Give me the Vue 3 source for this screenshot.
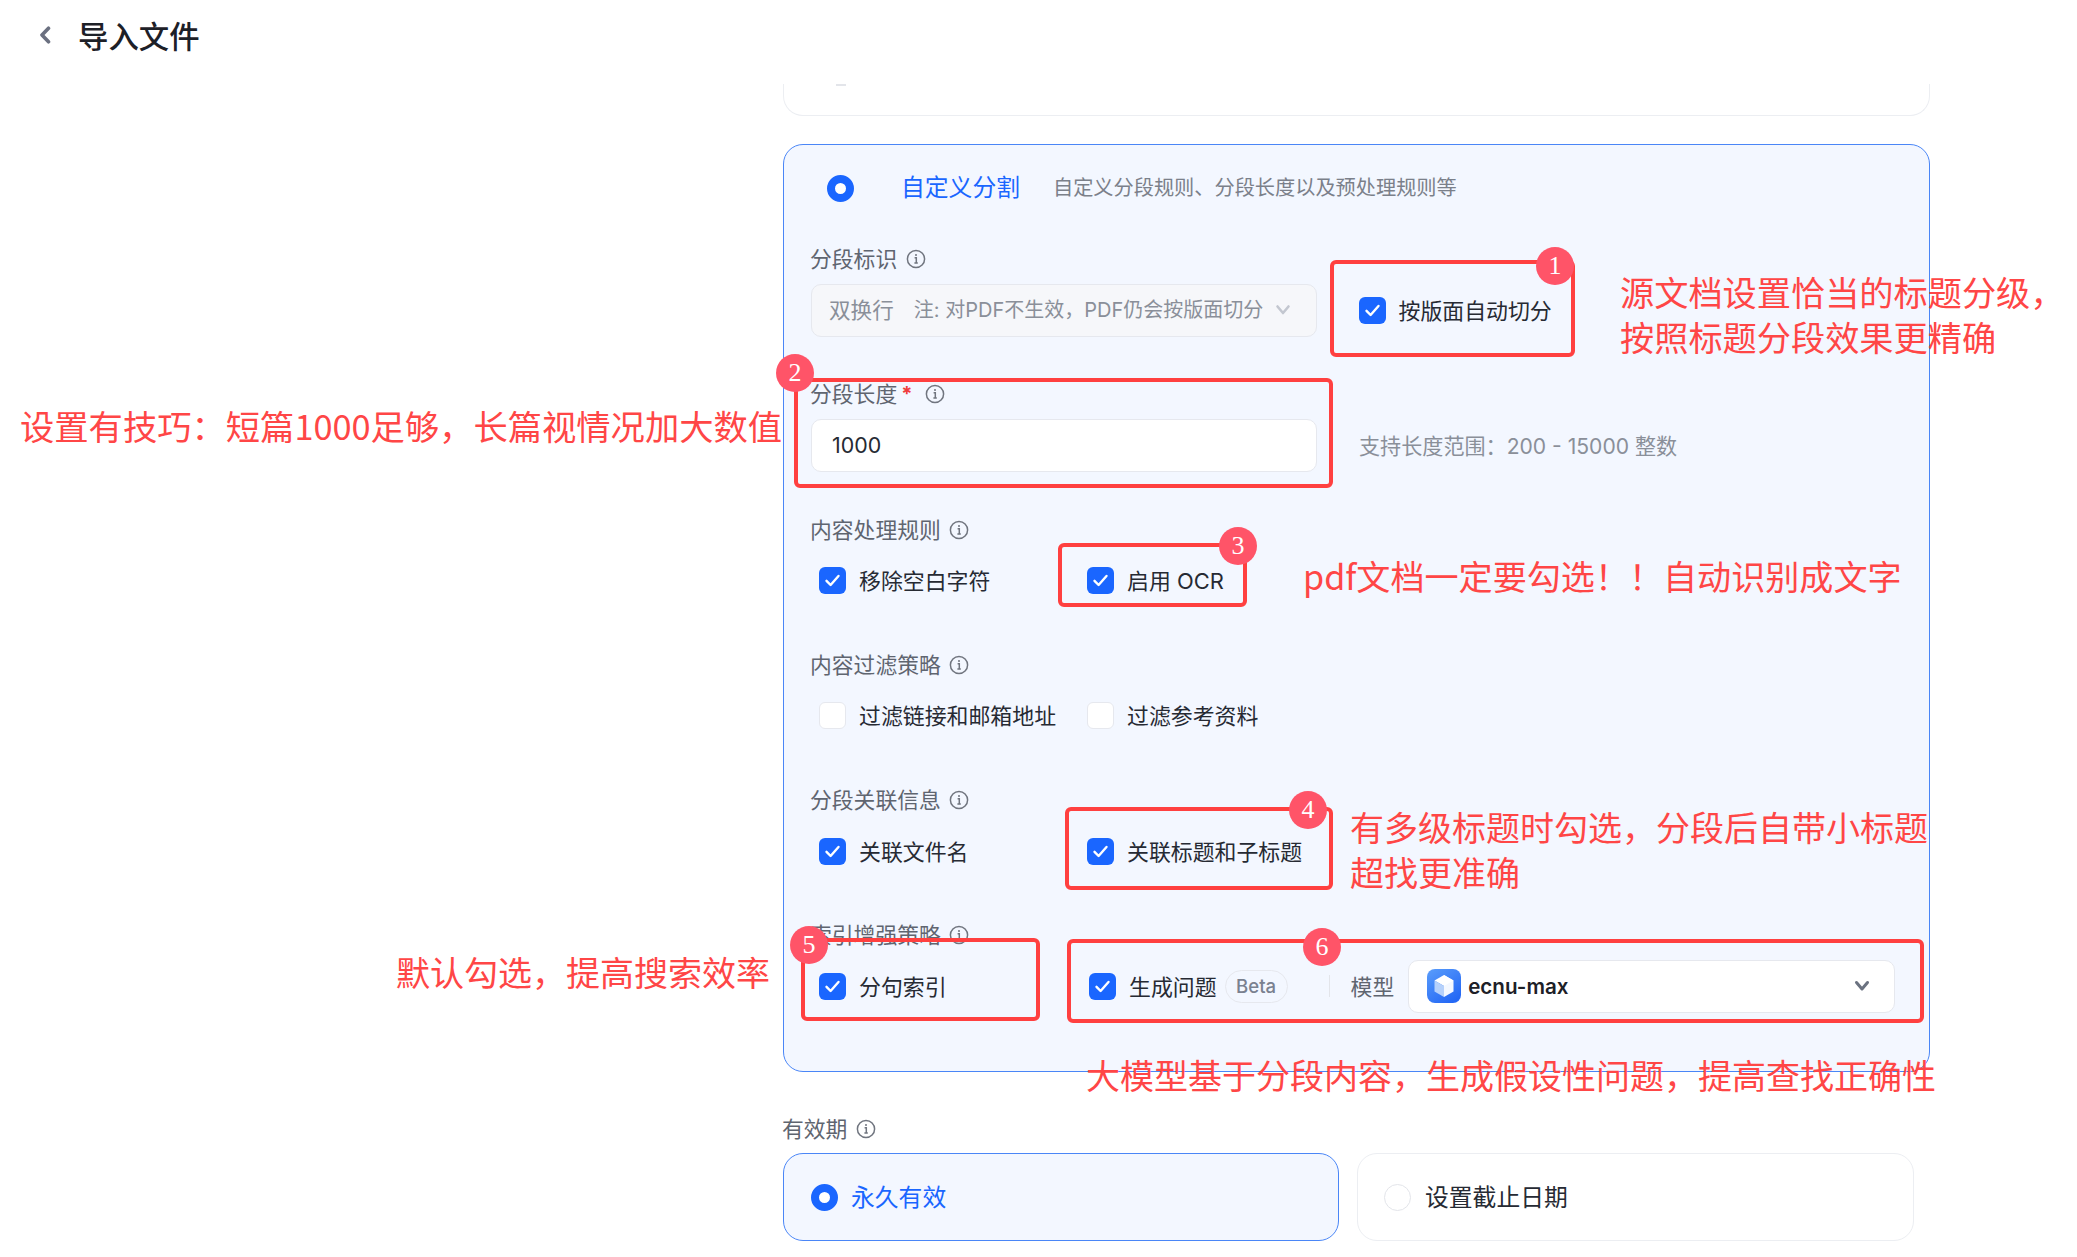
<script setup>
const checkPath = 'M7.5 13.8 L11.6 18 L19.5 9'
const rows = [
  { label: '内容处理规则', items: [{ text: '移除空白字符', on: true }, { text: '启用 OCR', on: true }] },
  { label: '内容过滤策略', items: [{ text: '过滤链接和邮箱地址', on: false }, { text: '过滤参考资料', on: false }] },
  { label: '分段关联信息', items: [{ text: '关联文件名', on: true }, { text: '关联标题和子标题', on: true }] }
]
const boxes = ['b1', 'b2', 'b3', 'b4', 'b5', 'b6']
const notes = [
  { cls: 'n1', lines: ['源文档设置恰当的标题分级，', '按照标题分段效果更精确'] },
  { cls: 'n2', lines: ['设置有技巧：短篇1000足够，长篇视情况加大数值'] },
  { cls: 'n3', lines: ['pdf文档一定要勾选！！自动识别成文字'] },
  { cls: 'n4', lines: ['有多级标题时勾选，分段后自带小标题', '超找更准确'] },
  { cls: 'n5', lines: ['默认勾选，提高搜索效率'] },
  { cls: 'n6', lines: ['大模型基于分段内容，生成假设性问题，提高查找正确性'] }
]
</script>

<template>
  <div class="page">
    <header class="topbar">
      <svg class="back" width="12" height="18" viewBox="0 0 12 18"><path d="M9.5 2.2 L3 9 L9.5 15.8" fill="none" stroke="#6b7080" stroke-width="3.6" stroke-linecap="round" stroke-linejoin="round"/></svg>
      <h1 class="title">导入文件</h1>
    </header>

    <main class="content">
      <div class="stub"></div>

      <section class="custom">
        <div class="custom-head">
          <span class="radio on"></span>
          <span class="custom-title">自定义分割</span>
          <span class="custom-desc">自定义分段规则、分段长度以及预处理规则等</span>
        </div>

        <div class="section">
          <div class="label"><span class="label-text">分段标识</span>
            <svg class="info" viewBox="0 0 20 20"><circle cx="10" cy="10" r="8.6" fill="none" stroke="#70757f" stroke-width="1.5"/><path d="M8.6 8.7h1.7v5M8.4 14h3.4" fill="none" stroke="#70757f" stroke-width="1.5"/><circle cx="10" cy="5.9" r="1" fill="#70757f"/></svg>
          </div>
          <div class="control-row">
            <div class="select disabled">
              <span class="sel-main">双换行</span>
              <span class="sel-note">注: 对PDF不生效，PDF仍会按版面切分</span>
              <svg class="sel-chev" width="16" height="12" viewBox="0 0 16 12"><path d="M2.5 2.5 L8 9 L13.5 2.5" fill="none" stroke="#c3c7d0" stroke-width="2.6" stroke-linecap="round" stroke-linejoin="round"/></svg>
            </div>
            <label class="check-item">
              <span class="check on"><svg viewBox="0 0 27 27"><path :d="checkPath" fill="none" stroke="#fff" stroke-width="2.4" stroke-linecap="round" stroke-linejoin="round"/></svg></span>
              <span class="check-text">按版面自动切分</span>
            </label>
          </div>
        </div>

        <div class="section">
          <div class="label"><span class="label-text">分段长度</span><span class="req">*</span>
            <svg class="info" viewBox="0 0 20 20"><circle cx="10" cy="10" r="8.6" fill="none" stroke="#70757f" stroke-width="1.5"/><path d="M8.6 8.7h1.7v5M8.4 14h3.4" fill="none" stroke="#70757f" stroke-width="1.5"/><circle cx="10" cy="5.9" r="1" fill="#70757f"/></svg>
          </div>
          <div class="control-row">
            <div class="input">1000</div>
            <span class="hint">支持长度范围：200 - 15000 整数</span>
          </div>
        </div>

        <div class="section" v-for="row in rows" :key="row.label">
          <div class="label"><span class="label-text">{{ row.label }}</span>
            <svg class="info" viewBox="0 0 20 20"><circle cx="10" cy="10" r="8.6" fill="none" stroke="#70757f" stroke-width="1.5"/><path d="M8.6 8.7h1.7v5M8.4 14h3.4" fill="none" stroke="#70757f" stroke-width="1.5"/><circle cx="10" cy="5.9" r="1" fill="#70757f"/></svg>
          </div>
          <div class="checks">
            <label class="check-item fixed" v-for="item in row.items" :key="item.text">
              <span class="check" :class="{ on: item.on }"><svg v-if="item.on" viewBox="0 0 27 27"><path :d="checkPath" fill="none" stroke="#fff" stroke-width="2.4" stroke-linecap="round" stroke-linejoin="round"/></svg></span>
              <span class="check-text">{{ item.text }}</span>
            </label>
          </div>
        </div>

        <div class="section">
          <div class="label"><span class="label-text">索引增强策略</span>
            <svg class="info" viewBox="0 0 20 20"><circle cx="10" cy="10" r="8.6" fill="none" stroke="#70757f" stroke-width="1.5"/><path d="M8.6 8.7h1.7v5M8.4 14h3.4" fill="none" stroke="#70757f" stroke-width="1.5"/><circle cx="10" cy="5.9" r="1" fill="#70757f"/></svg>
          </div>
          <div class="checks">
            <label class="check-item fixed wide">
              <span class="check on"><svg viewBox="0 0 27 27"><path :d="checkPath" fill="none" stroke="#fff" stroke-width="2.4" stroke-linecap="round" stroke-linejoin="round"/></svg></span>
              <span class="check-text">分句索引</span>
            </label>
            <label class="check-item">
              <span class="check on"><svg viewBox="0 0 27 27"><path :d="checkPath" fill="none" stroke="#fff" stroke-width="2.4" stroke-linecap="round" stroke-linejoin="round"/></svg></span>
              <span class="check-text">生成问题</span>
            </label>
            <span class="beta">Beta</span>
            <span class="divider"></span>
            <span class="model-label">模型</span>
            <div class="select model">
              <svg class="cube" width="34" height="34" viewBox="0 0 34 34">
                <defs><linearGradient id="cubeg" x1="0" y1="0" x2="0.7" y2="1"><stop offset="0" stop-color="#5a9dfb"/><stop offset="1" stop-color="#2468f5"/></linearGradient></defs>
                <rect width="34" height="34" rx="8" fill="url(#cubeg)"/>
                <path d="M17 6 L26.5 11.5 V22.5 L17 28 Z" fill="#f4f8ff"/>
                <path d="M17 6 L7.5 11.5 L17 17 L26.5 11.5 Z" fill="#ffffff"/>
                <path d="M7.5 11.5 V22.5 L17 28 V17 Z" fill="#b6d1fb"/>
              </svg>
              <span class="model-name">ecnu-max</span>
              <svg class="model-chev" width="16" height="12" viewBox="0 0 16 12"><path d="M2.5 2.5 L8 9 L13.5 2.5" fill="none" stroke="#6b7280" stroke-width="3" stroke-linecap="round" stroke-linejoin="round"/></svg>
            </div>
          </div>
        </div>
      </section>

      <div class="label expiry-label"><span class="label-text">有效期</span>
        <svg class="info" viewBox="0 0 20 20"><circle cx="10" cy="10" r="8.6" fill="none" stroke="#70757f" stroke-width="1.5"/><path d="M8.6 8.7h1.7v5M8.4 14h3.4" fill="none" stroke="#70757f" stroke-width="1.5"/><circle cx="10" cy="5.9" r="1" fill="#70757f"/></svg>
      </div>
      <div class="expiry">
        <div class="exp-card active">
          <span class="radio on"></span>
          <span class="exp-text">永久有效</span>
        </div>
        <div class="exp-card">
          <span class="radio"></span>
          <span class="exp-text">设置截止日期</span>
        </div>
      </div>
    </main>

    <div class="overlay">
      <div v-for="(b, i) in boxes" :key="b" class="redbox" :class="b">
        <span class="badge">{{ i + 1 }}</span>
      </div>
      <div v-for="n in notes" :key="n.cls" class="note" :class="n.cls">
        <div v-for="l in n.lines" :key="l">{{ l }}</div>
      </div>
    </div>
  </div>
</template>

<style>
html, body { margin: 0; padding: 0; background: #fff; overflow: hidden; }
</style>

<style scoped>
.page {
  position: relative;
  width: 2077px;
  height: 1257px;
  overflow: hidden;
  background: #fff;
  font-family: Inter, "Noto Sans CJK SC", sans-serif;
  color: #262a33;
}
.topbar {
  height: 70px;
  margin-bottom: 14px;
  display: flex;
  align-items: center;
  padding-left: 39px;
  box-sizing: border-box;
}
.back { margin-right: 27px; }
.title { margin: 0; font-size: 30.4px; font-weight: 500; color: #1d2027; font-family: "Noto Sans CJK SC", sans-serif; }
.content { margin-left: 783px; width: 1147px; }
.stub {
  position: relative;
  height: 32px;
  box-sizing: border-box;
  border: 1px solid #eceef2;
  border-top: none;
  border-radius: 0 0 20px 20px;
}
.stub::after {
  content: "";
  position: absolute;
  left: 52px;
  top: 0;
  width: 10px;
  height: 2px;
  background: #e3e5ea;
}
.custom {
  margin-top: 28px;
  height: 928px;
  box-sizing: border-box;
  border: 1.4px solid #4a86f7;
  border-radius: 20px;
  background: #f3f7ff;
  padding: 0 0 0 27px;
}
.custom-head {
  height: 86px;
  margin-bottom: 14px;
  display: flex;
  align-items: center;
}
.radio {
  flex: none;
  width: 27px;
  height: 27px;
  box-sizing: border-box;
  border-radius: 50%;
  background: #fff;
  border: 1.4px solid #e3e5ea;
}
.radio.on { border: 8px solid #1a66ff; }
.custom-head .radio { margin-left: 16px; }
.custom-title { margin-left: 47px; margin-top: -5px; font-size: 23.8px; color: #1a66ff; }
.custom-desc { margin-left: 33px; margin-top: -3px; font-size: 20.2px; color: #7b808a; }
.section { margin-bottom: 43.8px; }
.label {
  height: 28px;
  display: flex;
  align-items: center;
  font-size: 21.8px;
  color: #5f6570;
  margin-bottom: 10.5px;
}
.label-text { margin-left: -1px; margin-top: -3px; }
.info { width: 20px; height: 20px; margin-left: 8.5px; flex: none; }
.req { color: #f03b3b; margin-left: 4px; font-weight: 700; font-size: 20px; }
.req + .info { margin-left: 13px; }
.control-row { display: flex; align-items: center; height: 53px; }
.select {
  box-sizing: border-box;
  height: 53px;
  border: 1.4px solid #e6e8ee;
  border-radius: 10px;
  display: flex;
  align-items: center;
}
.select.disabled {
  flex: none;
  width: 506px;
  background: #f6f7fa;
  padding: 0 25px 0 17px;
  color: #8a8f99;
}
.sel-main { font-size: 21.6px; margin-top: -3px; }
.sel-note { font-size: 20px; margin-left: 20px; margin-top: -3px; white-space: nowrap; }
.sel-chev { margin-left: auto; }
.input {
  flex: none;
  box-sizing: border-box;
  width: 506px;
  height: 53px;
  padding-left: 20px;
  display: flex;
  align-items: center;
  background: #fff;
  border: 1.4px solid #e6e8ee;
  border-radius: 10px;
  font-size: 21.4px;
}
.hint { margin-left: 42px; font-size: 21.1px; color: #8a8f99; white-space: nowrap; }
.control-row .check-item { margin-left: 41.5px; }
.checks { display: flex; align-items: center; height: 53px; padding-left: 8px; }
.check-item { display: flex; align-items: center; flex: none; }
.check-item.fixed { width: 268px; }
.check-item.wide { width: 270px; }
.check {
  flex: none;
  width: 27px;
  height: 27px;
  box-sizing: border-box;
  border-radius: 6px;
  background: #fff;
  border: 1.4px solid #e6e8ee;
}
.check.on { background: #1a66ff; border: none; }
.check svg { display: block; width: 27px; height: 27px; }
.check-text { margin-left: 13px; margin-top: -2px; font-size: 21.9px; color: #262a33; white-space: nowrap; }
.beta {
  box-sizing: border-box;
  width: 63px;
  height: 33px;
  margin-left: 8px;
  border: 1.4px solid #e6e8ee;
  border-radius: 17px;
  display: flex;
  align-items: center;
  justify-content: center;
  font-size: 18.6px;
  font-weight: 500;
  color: #7a8190;
}
.divider { width: 1px; height: 22px; margin-left: 41px; background: #e3e5ea; }
.model-label { margin-left: 21px; margin-top: -2px; font-size: 21.8px; color: #5f6570; }
.select.model {
  width: 487px;
  margin-left: 14px;
  background: #fff;
  padding-left: 18px;
}
.cube { flex: none; }
.model-name { margin-left: 7px; font-size: 20.6px; font-weight: 600; color: #1d2027; }
.model-chev { margin-left: auto; margin-right: 24px; }
.expiry-label { margin-top: 43px; margin-bottom: 10px; }
.expiry { display: grid; grid-template-columns: 556px 558px; column-gap: 18px; }
.exp-card {
  box-sizing: border-box;
  height: 88px;
  border: 1.4px solid #eceef2;
  border-radius: 20px;
  display: flex;
  align-items: center;
  padding-left: 27px;
}
.exp-card.active { background: #f3f7ff; border-color: #4a86f7; }
.exp-card + .exp-card { padding-left: 26px; width: 556.5px; }
.exp-text { margin-left: 13px; margin-top: -3px; font-size: 23.8px; color: #262a33; }
.exp-card + .exp-card .exp-text { margin-left: 14px; }
.exp-card.active .exp-text { color: #1a66ff; }

.overlay { position: absolute; inset: 0; pointer-events: none; }
.redbox {
  position: absolute;
  box-sizing: border-box;
  border: 4px solid #ff4040;
  border-radius: 6px;
}
.badge {
  position: absolute;
  width: 38px;
  height: 38px;
  border-radius: 50%;
  background: #ff5468;
  color: #fff;
  font-family: "Liberation Serif", serif;
  font-size: 26px;
  line-height: 38px;
  text-align: center;
}
.b1 { left: 1330px; top: 260px; width: 245px; height: 97px; }
.b1 .badge { right: -3px; top: -17px; }
.b2 { left: 794px; top: 378px; width: 539px; height: 110px; }
.b2 .badge { left: -22px; top: -28px; }
.b3 { left: 1058px; top: 543px; width: 189px; height: 64px; }
.b3 .badge { right: -14px; top: -20px; }
.b4 { left: 1065px; top: 807px; width: 268px; height: 83px; }
.b4 .badge { right: 2px; top: -20px; }
.b5 { left: 801px; top: 938px; width: 239px; height: 83px; }
.b5 .badge { left: -15px; top: -16px; }
.b6 { left: 1067px; top: 939px; width: 857px; height: 84px; }
.b6 .badge { left: 232px; top: -15px; }
.note {
  position: absolute;
  font-family: "Noto Sans CJK SC", sans-serif;
  font-size: 34px;
  line-height: 45px;
  color: #ff4646;
  white-space: nowrap;
}
.n1 { left: 1620px; top: 269px; font-size: 34.2px; }
.n2 { left: 20px; top: 403px; font-size: 34.3px; }
.n3 { left: 1303px; top: 553px; font-size: 34.1px; }
.n4 { left: 1350px; top: 804px; }
.n5 { left: 396px; top: 949px; }
.n6 { left: 1086px; top: 1052px; }
</style>
